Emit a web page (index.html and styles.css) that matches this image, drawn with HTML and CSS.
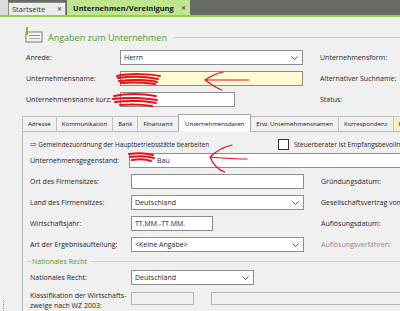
FILE: index.html
```html
<html>
    <head>
        <link rel="stylesheet" href="styles.css">
    </head>
    <body>
        <div class="doctabs">
            <div class="doctabs-edge"></div>
            <div class="doctab">Startseite<span class="close">&#x2715;</span></div>
            <div class="doctab active">Unternehmen/Vereinigung<span class="close">&#x2715;</span></div>
        </div>
        <div class="page">
            <div class="section-head">
                <svg class="head-icon" width="18" height="16" viewBox="0 0 18 16">
                    <rect x="1" y="5" width="16" height="10" fill="#f4f4f4" stroke="#7a7a7a"/>
                    <rect x="1" y="0" width="2" height="8" fill="#7cc242"/>
                    <rect x="4" y="8" width="11" height="1" fill="#8c8c8c"/>
                    <rect x="4" y="11" width="11" height="1" fill="#a8a8a8"/>
                </svg>
                <span class="head-title">Angaben zum Unternehmen</span>
                <div class="rule"></div>
            </div>

            <div class="top-grid">
                <div class="label">Anrede:</div>
                <div class="field select"><span>Herrn</span><svg class="chev" width="7" height="4" viewBox="0 0 7 4"><polyline points="0.5,0.5 3.5,3.5 6.5,0.5" fill="none" stroke="#555"/></svg></div>
                <div class="label right">Unternehmensform:</div>

                <div class="label">Unternehmensname:</div>
                <div class="field yellow"></div>
                <div class="label right">Alternativer Suchname:</div>

                <div class="label">Unternehmensname kurz:</div>
                <div class="field short"></div>
                <div class="label right">Status:</div>
            </div>

            <div class="tabstrip">
                <div class="tab">Adresse</div>
                <div class="tab">Kommunikation</div>
                <div class="tab">Bank</div>
                <div class="tab">Finanzamt</div>
                <div class="tab selected">Unternehmensdaten</div>
                <div class="tab">Erw. Unternehmensnamen</div>
                <div class="tab">Korrespondenz</div>
                <div class="tab extra">Ko</div>
            </div>

            <div class="panel">
                <div class="link-row">
                    <span class="link"><span class="arrow">&#x21E8;</span> Gemeindezuordnung der Hauptbetriebsstätte bearbeiten</span>
                    <span class="check"><span class="box"></span>Steuerberater ist Empfangsbevollmächtigt</span>
                </div>

                <div class="row">
                    <div class="plabel">Unternehmensgegenstand:</div>
                    <div class="field long"><span class="bau">Bau</span></div>
                </div>
                <div class="row">
                    <div class="plabel">Ort des Firmensitzes:</div>
                    <div class="field"></div>
                    <div class="label">Gründungsdatum:</div>
                </div>
                <div class="row">
                    <div class="plabel">Land des Firmensitzes:</div>
                    <div class="field select"><span>Deutschland</span><svg class="chev" width="7" height="4" viewBox="0 0 7 4"><polyline points="0.5,0.5 3.5,3.5 6.5,0.5" fill="none" stroke="#555"/></svg></div>
                    <div class="label">Gesellschaftsvertrag vom:</div>
                </div>
                <div class="row">
                    <div class="plabel">Wirtschaftsjahr:</div>
                    <div class="field year"><span>TT.MM.-TT.MM.</span></div>
                    <div class="label">Auflösungsdatum:</div>
                </div>
                <div class="row">
                    <div class="plabel">Art der Ergebnisaufteilung:</div>
                    <div class="field select"><span>&lt;Keine Angabe&gt;</span><svg class="chev" width="7" height="4" viewBox="0 0 7 4"><polyline points="0.5,0.5 3.5,3.5 6.5,0.5" fill="none" stroke="#555"/></svg></div>
                    <div class="label muted">Auflösungsverfahren:</div>
                </div>

                <div class="group">
                    <div class="gline short-line"></div>
                    <span class="group-title">Nationales Recht</span>
                    <div class="gline"></div>
                </div>
                <div class="row">
                    <div class="plabel">Nationales Recht:</div>
                    <div class="field select mid"><span>Deutschland</span><svg class="chev" width="7" height="4" viewBox="0 0 7 4"><polyline points="0.5,0.5 3.5,3.5 6.5,0.5" fill="none" stroke="#555"/></svg></div>
                </div>
                <div class="row two-line">
                    <div class="plabel">Klassifikation der Wirtschafts-<br>zweige nach WZ 2003:</div>
                    <div class="field disabled tiny"></div>
                    <div class="field disabled rest"></div>
                </div>
            </div>
        </div>

        <div class="grip"></div>

        <svg class="marks" width="400" height="311" viewBox="0 0 400 311">
            <g fill="none" stroke="#e8101a" stroke-linecap="round" stroke-linejoin="round">
                <!-- scribbles -->
                <path d="M117 76 C130 73 150 74 160 76 M118 78 C132 76 148 77 158 79 M119 81 C133 79 149 80 157 82 M121 83 C135 82 147 83 155 84" stroke-width="2"/>
                <path d="M114 96 C128 93 145 94 156 96 M113 99 C127 97 146 98 157 100 M115 102 C130 100 147 101 156 103 M120 105 C133 104 146 105 152 106" stroke-width="2"/>
                <path d="M129 154 C137 153 146 153 153 155 M130 157 C138 156 147 156 154 158 M132 160 C139 159 146 159 151 161" stroke-width="2"/>
                <!-- arrows -->
                <path d="M205 80 L249 80 M205 80 C211 76 217 73 223 72 M205 80 C211 84 216 88 222 90" stroke-width="1.2"/>
                <path d="M210 157 C222 158 236 159 247 159 M210 157 C216 151 224 147 232 145 M210 157 C213 164 218 170 225 172" stroke-width="1.2"/>
            </g>
        </svg>
    </body>
</html>
```

FILE: styles.css
```css
body {
    margin: 0;
    width: 400px;
    height: 311px;
    overflow: hidden;
    background-color: #f0f0f0;
    font-family: "Open Sans", "Noto Sans", sans-serif;
    font-size: 7px;
    color: #1e1e1e;
}
.doctabs {
    display: flex;
    align-items: flex-end;
    height: 15px;
    background-color: #676b67;
    border-bottom: 2px solid #8fd14f;
}
.doctabs-edge {
    width: 8px;
    height: 15px;
    background-color: #dcdcdc;
}
.doctab {
    display: flex;
    align-items: center;
    justify-content: space-between;
    box-sizing: border-box;
    width: 58px;
    height: 13px;
    padding: 0 3px 0 3px;
    margin-right: 1px;
    background-color: #ececec;
    border: 1px solid #8a8a8a;
    border-bottom: none;
    font-size: 7.5px;
    color: #333;
}
.doctab.active {
    width: 123px;
    height: 15px;
    padding-left: 5px;
    background-color: #bde68e;
    border-color: #bde68e;
    font-weight: bold;
    color: #1a1a1a;
}
.close {
    font-size: 6px;
    color: #555;
    font-weight: bold;
}
.page {
    padding-left: 22px;
}
.section-head {
    display: flex;
    align-items: center;
    height: 16px;
    margin-top: 10px;
    padding-left: 3px;
}
.head-icon {
    margin-right: 5px;
}
.head-title {
    margin-top: 5px;
    font-size: 9px;
    color: #4f9a32;
}
.rule {
    flex: 1;
    height: 1px;
    margin-top: 5px;
    margin-left: 7px;
    background-color: #c8c8c8;
}
.top-grid {
    display: grid;
    grid-template-columns: 94px 183px auto;
    grid-auto-rows: 15px;
    row-gap: 6px;
    margin-top: 7px;
    padding-left: 4px;
}
.label, .plabel {
    display: flex;
    align-items: center;
    white-space: nowrap;
}
.label.right {
    padding-left: 17px;
}
.muted {
    color: #8a8a8a;
}
.field {
    display: flex;
    align-items: center;
    justify-content: space-between;
    box-sizing: border-box;
    height: 15px;
    padding: 0 4px 0 3px;
    background-color: #fff;
    border: 1px solid #8c8c8c;
    white-space: nowrap;
}
.field.yellow {
    background-color: #fffbd2;
}
.field.short {
    width: 115px;
}
.chev {
    flex: none;
}
.tabstrip {
    display: flex;
    align-items: flex-end;
    height: 18px;
    margin-top: 6px;
    white-space: nowrap;
}
.tab {
    box-sizing: border-box;
    height: 15px;
    padding: 0 5px;
    line-height: 14px;
    font-size: 6.1px;
    color: #111;
    background-color: #f0f0f0;
    border: 1px solid #c3c3c3;
    border-bottom: none;
    margin-right: -1px;
}
.tab.selected {
    height: 18px;
    padding: 0 6px;
    line-height: 17px;
    background-color: #fcfcfc;
    border-color: #a8a8a8;
    position: relative;
    z-index: 1;
    margin-bottom: -1px;
}
.tab.extra {
    background-color: #f8efc4;
}
.panel {
    box-sizing: border-box;
    height: 200px;
    padding: 5px 0 0 7px;
    border-top: 1px solid #b8b8b8;
    border-left: 1px solid #b8b8b8;
}
.link-row {
    display: flex;
    align-items: center;
    height: 14px;
    margin-bottom: 2px;
    white-space: nowrap;
}
.link {
    flex: none;
    width: 248px;
    font-size: 6.4px;
}
.arrow {
    font-family: "DejaVu Sans", sans-serif;
    font-size: 8px;
    color: #444;
}
.check {
    display: flex;
    align-items: center;
    font-size: 6.6px;
}
.box {
    box-sizing: border-box;
    width: 11px;
    height: 11px;
    margin-right: 5px;
    background-color: #fff;
    border: 1px solid #333;
}
.row {
    display: grid;
    grid-template-columns: 101px 190px auto;
    height: 15px;
    margin-bottom: 6px;
}
.row .field {
    width: 173px;
}
.row .field.long {
    width: 280px;
    margin-left: -2px;
    justify-content: flex-start;
}
.bau {
    padding-left: 24px;
}
.row .field.year {
    width: 82px;
}
.row .field.mid {
    width: 123px;
}
.group {
    display: flex;
    align-items: center;
    height: 12px;
    margin: -3px 0 3px -3px;
}
.gline {
    flex: 1;
    height: 1px;
    background-color: #cfcfcf;
}
.gline.short-line {
    flex: none;
    width: 4px;
    margin-right: 1px;
}
.group-title {
    margin-right: 3px;
    color: #4f9a32;
}
.row.two-line {
    grid-template-columns: 101px 80px auto;
    height: 24px;
    line-height: 10px;
}
.row.two-line .plabel {
    align-items: flex-start;
    margin-top: 0;
}
.field.disabled {
    height: 13px;
    margin-top: 1px;
    background-color: #f0f0f0;
    border-color: #b4b4b4;
}
.row .field.tiny {
    width: 63px;
}
.row .field.rest {
    width: 200px;
}
.grip {
    position: absolute;
    left: 3px;
    top: 300px;
    width: 1px;
    height: 11px;
    border-left: 1px dotted #999;
}
.marks {
    position: absolute;
    left: 0;
    top: 0;
    pointer-events: none;
}
```
